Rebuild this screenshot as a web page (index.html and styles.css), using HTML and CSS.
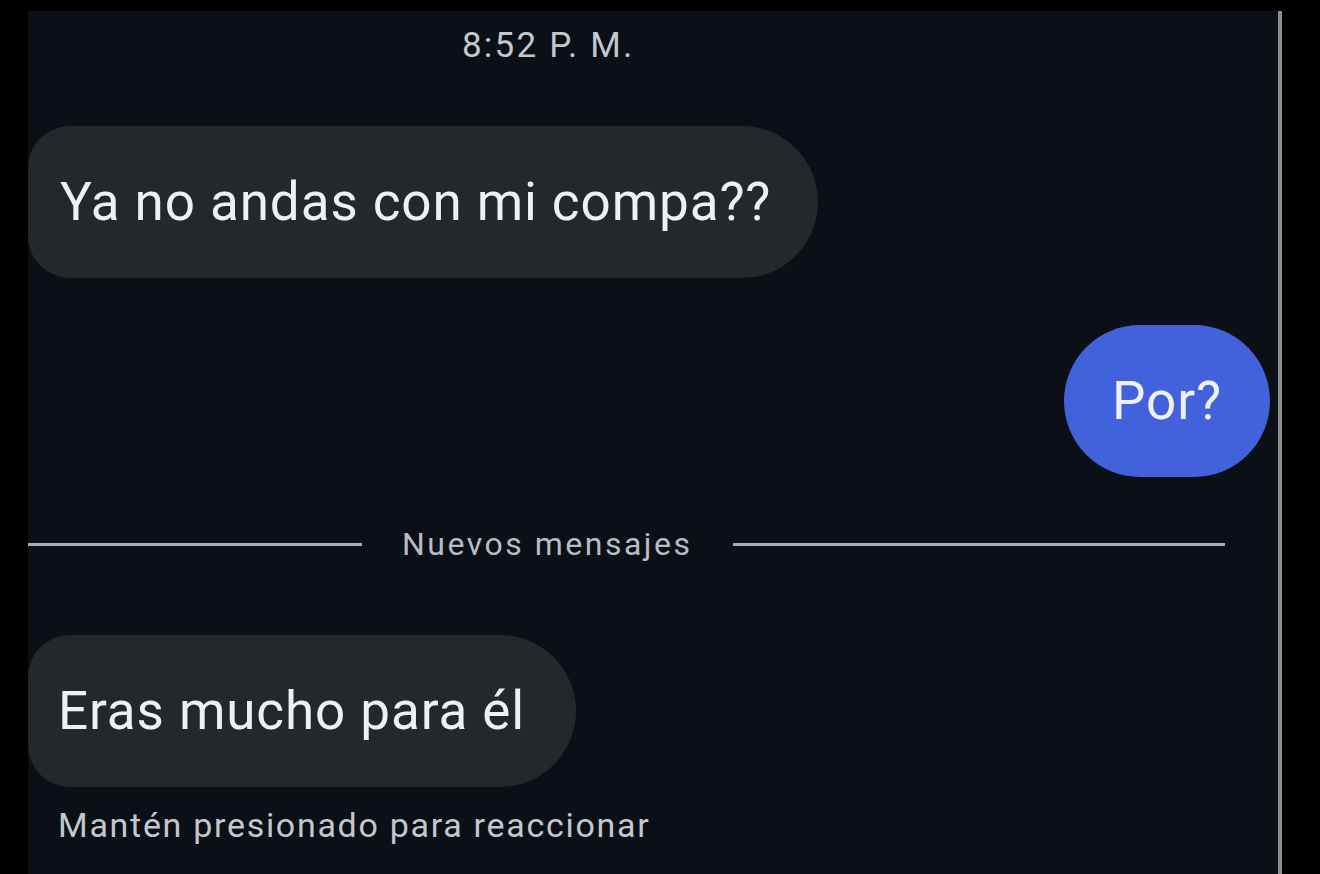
FILE: index.html
```html
<!DOCTYPE html>
<html lang="es">
<head>
<meta charset="utf-8">
<title>Chat</title>
<link rel="stylesheet" href="styles.css">
</head>
<body>
<div class="screen">
  <div class="time">8:52 P. M.</div>
  <div class="row row-in first">
    <div class="bubble in b1">Ya no andas con mi compa??</div>
  </div>
  <div class="row row-out">
    <div class="bubble out">Por?</div>
  </div>
  <div class="divider">
    <span class="line line-left"></span>
    <span class="divider-label">Nuevos mensajes</span>
    <span class="line line-right"></span>
  </div>
  <div class="row row-in third">
    <div class="bubble in b3">Eras mucho para él</div>
  </div>
  <div class="hint">Mantén presionado para reaccionar</div>
</div>
</body>
</html>
```
FILE: styles.css
```css
html, body {
  margin: 0;
  padding: 0;
}
body {
  background: #000;
  height: 874px;
  overflow: hidden;
  font-family: Roboto, "Noto Sans", "Liberation Sans", sans-serif;
}
.screen {
  margin-left: 28px;
  margin-top: 11px;
  width: 1250px;
  height: 863px;
  background: #0b0f16;
  border-right: 4px solid #8c8d90;
  display: flex;
  flex-direction: column;
}
.time {
  margin-top: 15px;
  padding-left: 434px;
  font-size: 35px;
  line-height: 40px;
  letter-spacing: 2.2px;
  color: #c4c7cc;
}
.row {
  display: flex;
}
.row-in {
  justify-content: flex-start;
}
.row-out {
  justify-content: flex-end;
  padding-right: 8px;
  margin-top: 47px;
}
.first {
  margin-top: 60px;
}
.third {
  margin-top: 71px;
}
.bubble {
  height: 152px;
  display: flex;
  align-items: center;
  font-size: 53px;
  letter-spacing: 0.9px;
  color: #eef0f3;
  box-sizing: border-box;
}
.in {
  background: #24272c;
  border-radius: 42px 76px 76px 42px;
}
.b1 {
  width: 790px;
  padding-left: 32px;
}
.b3 {
  width: 548px;
  padding-left: 30px;
}
.out {
  background: #4262dc;
  border-radius: 77px;
  width: 206px;
  justify-content: center;
}
.divider {
  margin-top: 47px;
  height: 40px;
  display: flex;
  align-items: center;
  padding-right: 53px;
}
.line {
  height: 3px;
  background: #a9acb2;
}
.line-left {
  width: 334px;
}
.line-right {
  flex: 1;
}
.divider-label {
  margin: 0 41px 0 40px;
  font-size: 32px;
  letter-spacing: 2.5px;
  color: #b9bcc3;
}
.hint {
  margin-top: 18px;
  padding-left: 30px;
  font-size: 34px;
  line-height: 40px;
  color: #c4c7cd;
  letter-spacing: 1.7px;
}
```
